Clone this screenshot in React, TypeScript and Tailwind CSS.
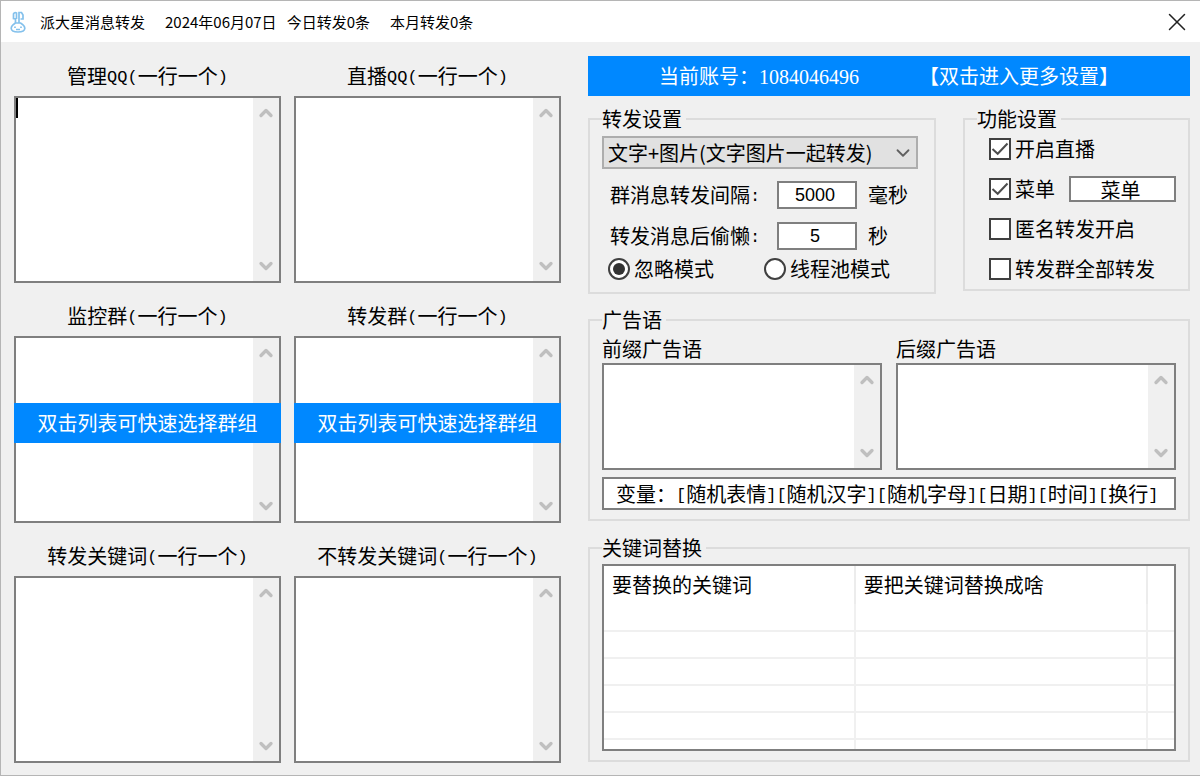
import { ChevronDown, ChevronUp, X } from "lucide-react";
import type { ReactNode } from "react";

// Half-width characters take half the advance of a full-width one
function Mixed({ text }: { text: string }) {
    return (
        <>
            {text.split(/([\x21-\x7e]+)/).map((part, i) =>
                i % 2 === 1 ? (
                    <span key={i} className="align-[2px] font-['Liberation_Mono',monospace] text-[17px] leading-none">{part}</span>
                ) : (
                    part
                )
            )}
        </>
    );
}

function ScrollTextArea({ id, height, caret }: { id: string; height: string; caret?: boolean }) {
    return (
        <div className={`relative flex border-2 border-[#7f7f7f] bg-white ${height}`}>
            <textarea id={id} className="min-w-0 flex-1 resize-none overflow-hidden p-1 outline-none" />
            <div className="flex w-[26px] flex-col items-center justify-between bg-[#f0f0f0] py-[5px] text-[#bfbfbf]">
                <ChevronUp size={20} strokeWidth={4} />
                <ChevronDown size={20} strokeWidth={4} />
            </div>
            {caret && <span className="absolute left-0 top-0 h-5 w-0.5 bg-black" />}
        </div>
    );
}

function ListField({ id, label, hint, caret }: { id: string; label: string; hint?: string; caret?: boolean }) {
    return (
        <div>
            <label htmlFor={id} className="block h-10 text-center leading-10">
                <Mixed text={label} />
            </label>
            <div className="relative">
                <ScrollTextArea id={id} height="h-[187px]" caret={caret} />
                {hint && (
                    <button type="button" className="absolute inset-x-0 top-[67px] h-10 bg-[#0088ff] text-white">
                        {hint}
                    </button>
                )}
            </div>
        </div>
    );
}

function Group({ title, className, children }: { title: string; className: string; children: ReactNode }) {
    return (
        <fieldset className={`min-w-0 border-2 border-[#dcdcdc] px-3 ${className}`}>
            <legend className="h-[26px] pr-1 leading-[26px]">{title}</legend>
            {children}
        </fieldset>
    );
}

function Check({ label, checked }: { label: string; checked?: boolean }) {
    return (
        <label className="flex h-[26px] items-center gap-1">
            <span className="relative size-[22px]">
                <input
                    type="checkbox"
                    defaultChecked={checked}
                    className="peer block size-[22px] appearance-none border-2 border-[#404040] bg-white"
                />
                <svg
                    viewBox="0 0 22 22"
                    className="pointer-events-none absolute inset-0 hidden fill-none stroke-[#4d4d4d] stroke-2 peer-checked:block"
                >
                    <path d="M3.5 11 L8.7 15.8 L18.5 5.5" />
                </svg>
            </span>
            {label}
        </label>
    );
}

function Radio({ label, checked }: { label: string; checked?: boolean }) {
    return (
        <label className="flex items-center gap-1">
            <input
                type="radio"
                name="mode"
                defaultChecked={checked}
                className="grid size-[22px] appearance-none place-items-center rounded-full border-2 border-[#404040] bg-white before:size-3 before:rounded-full checked:before:bg-[#333333]"
            />
            {label}
        </label>
    );
}

function NumberRow({ id, label, value, unit }: { id: string; label: string; value: string; unit: string }) {
    return (
        <div className="flex h-7 items-center pl-2">
            <label htmlFor={id} className="w-[167px]">
                <Mixed text={label} />
            </label>
            <input
                id={id}
                defaultValue={value}
                className="h-7 w-20 border-2 border-[#7f7f7f] bg-white pr-1 text-center font-['Liberation_Sans',sans-serif] text-[18px]"
            />
            <span className="ml-[11px]">{unit}</span>
        </div>
    );
}

const lists = [
    { id: "admins", label: "管理QQ(一行一个)", caret: true },
    { id: "live", label: "直播QQ(一行一个)" },
    { id: "watch", label: "监控群(一行一个)", hint: "双击列表可快速选择群组" },
    { id: "forward", label: "转发群(一行一个)", hint: "双击列表可快速选择群组" },
    { id: "keywords", label: "转发关键词(一行一个)" },
    { id: "blocked", label: "不转发关键词(一行一个)" },
];

export default function App() {
    return (
        <div className="min-h-screen border-y border-l border-[#b5b5b5] bg-[#f0f0f0] font-['Noto_Sans_CJK_SC',sans-serif] text-[20px] leading-6 text-black">
            <header className="flex h-[41px] items-center bg-white pl-[9px] pr-3 text-[15px]">
                <svg viewBox="0 0 16 22" className="h-[22px] w-4 fill-none stroke-[#84c1ec] stroke-[1.7]">
                    <path d="M5.5 12 V8 L3.5 7.5 V3 Q4.5 1 6.5 2 V8 M9 12 V1.5 H11.5 L13 4 V8 H10.5" />
                    <path d="M5.5 12 Q1.2 14.5 1.2 17.5 Q1.5 21 8 21 Q14.5 21 14.8 17.5 Q14.8 14.5 10.5 12 Z" />
                    <path d="M5 15.5 V17 M11 15.5 V17 M6 18.5 H10" />
                </svg>
                <h1 className="ml-[14px]">派大星消息转发</h1>
                <span className="ml-5">2024年06月07日</span>
                <span className="ml-[10px]">今日转发0条</span>
                <span className="ml-5">本月转发0条</span>
                <button type="button" aria-label="关闭" className="ml-auto text-[#222222]">
                    <X size={30} strokeWidth={1.2} className="-m-1" />
                </button>
            </header>

            <main className="grid grid-cols-[547fr_602fr] gap-x-[27px] pb-3 pl-[13px] pr-[10px] pt-[14px]">
                <div className="grid grid-cols-2 gap-x-[13px] gap-y-[13px]">
                    {lists.map((list) => (
                        <ListField key={list.id} {...list} />
                    ))}
                </div>

                <div className="flex min-w-0 flex-col">
                    <button type="button" className="flex h-10 items-center justify-center gap-[60px] bg-[#0088ff] text-white">
                        <span>
                            当前账号：<span className="font-['Liberation_Serif',serif]">1084046496</span>
                        </span>
                        <span>【双击进入更多设置】</span>
                    </button>

                    <div className="mt-[10px] grid grid-cols-[348fr_227fr] items-start gap-x-[27px]">
                        <Group title="转发设置" className="pb-[11px]">
                            <div className="relative mr-1 mt-1">
                                <select
                                    aria-label="转发设置"
                                    className="block h-[33px] w-full appearance-none border-2 border-[#adadad] bg-[#e1e1e1] pl-1"
                                >
                                    <option>文字+图片(文字图片一起转发)</option>
                                </select>
                                <ChevronDown size={22} strokeWidth={2} className="pointer-events-none absolute right-1 top-[6px] text-[#606060]" />
                            </div>
                            <div className="mt-3 flex flex-col gap-[13px]">
                                <NumberRow id="interval" label="群消息转发间隔:" value="5000" unit="毫秒" />
                                <NumberRow id="rest" label="转发消息后偷懒:" value="5" unit="秒" />
                            </div>
                            <div className="mt-[7px] flex gap-[50px] pl-[6px]">
                                <Radio label="忽略模式" checked />
                                <Radio label="线程池模式" />
                            </div>
                        </Group>

                        <Group title="功能设置" className="pb-[7px]">
                            <div className="mt-1 flex flex-col gap-[14px] pl-3">
                                <Check label="开启直播" checked />
                                <div className="flex items-center gap-[14px]">
                                    <Check label="菜单" checked />
                                    <input
                                        aria-label="菜单"
                                        defaultValue="菜单"
                                        className="h-[26px] min-w-0 flex-1 border-2 border-[#7f7f7f] bg-white pr-1 text-center leading-5"
                                    />
                                </div>
                                <Check label="匿名转发开启" />
                                <Check label="转发群全部转发" />
                            </div>
                        </Group>
                    </div>

                    <Group title="广告语" className="mt-[13px] pb-[9px]">
                        <div className="mt-1 grid grid-cols-2 gap-x-[14px]">
                            <div>
                                <label htmlFor="prefix" className="block h-[26px]">前缀广告语</label>
                                <ScrollTextArea id="prefix" height="h-[107px]" />
                            </div>
                            <div>
                                <label htmlFor="suffix" className="block h-[26px]">后缀广告语</label>
                                <ScrollTextArea id="suffix" height="h-[107px]" />
                            </div>
                        </div>
                        <p className="mt-[7px] h-[33px] overflow-hidden whitespace-nowrap border-2 border-[#7f7f7f] bg-white pl-3 leading-[29px]">
                            <Mixed text="变量：[随机表情][随机汉字][随机字母][日期][时间][换行]" />
                        </p>
                    </Group>

                    <Group title="关键词替换" className="mt-[14px] pb-[9px]">
                        <div className="mt-[3px] h-[187px] overflow-hidden border-2 border-[#7f7f7f] bg-white">
                            <table className="w-full table-fixed border-collapse text-left">
                                <thead>
                                    <tr className="h-[38px]">
                                        <th className="w-[44%] border-r-2 border-[#ececec] pl-2 font-normal">要替换的关键词</th>
                                        <th className="border-r-2 border-[#ececec] pl-2 font-normal">要把关键词替换成啥</th>
                                        <th className="w-[27px]" />
                                    </tr>
                                </thead>
                                <tbody>
                                    {[0, 1, 2, 3, 4, 5].map((row) => (
                                        <tr key={row} className="h-[27px] border-b-2 border-[#f0f0f0]">
                                            <td className="border-r-2 border-[#f0f0f0]" />
                                            <td className="border-r-2 border-[#f0f0f0]" />
                                            <td />
                                        </tr>
                                    ))}
                                </tbody>
                            </table>
                        </div>
                    </Group>
                </div>
            </main>
        </div>
    );
}
